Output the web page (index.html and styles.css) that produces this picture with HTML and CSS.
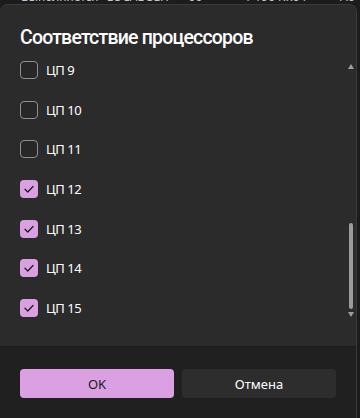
FILE: index.html
```html
<!DOCTYPE html>
<html lang="ru">
  <head>
    <meta charset="UTF-8" />
    <title>Соответствие процессоров</title>
    <link rel="stylesheet" href="styles.css">
  </head>
  <body>
    <div class="behind">
      <span class="cell c1">Выполняется</span>
      <span class="cell c2">LOCAL SEH</span>
      <span class="cell c3">00</span>
      <span class="cell c4">1 196 K</span>
      <span class="cell c5">x64</span>
      <span class="cell c6">Ao</span>
    </div>

    <section class="dialog">
      <div class="body">
        <h1 class="title">Соответствие процессоров</h1>
        <div class="scroller">
          <ul class="items">
            <li class="item"><span class="box"></span><span class="label">ЦП 9</span></li>
            <li class="item"><span class="box"></span><span class="label">ЦП 10</span></li>
            <li class="item"><span class="box"></span><span class="label">ЦП 11</span></li>
            <li class="item"><span class="box checked"><svg viewBox="0 0 18 18" width="18" height="18"><polyline points="5,9.3 7.8,12 13,6.5" /></svg></span><span class="label">ЦП 12</span></li>
            <li class="item"><span class="box checked"><svg viewBox="0 0 18 18" width="18" height="18"><polyline points="5,9.3 7.8,12 13,6.5" /></svg></span><span class="label">ЦП 13</span></li>
            <li class="item"><span class="box checked"><svg viewBox="0 0 18 18" width="18" height="18"><polyline points="5,9.3 7.8,12 13,6.5" /></svg></span><span class="label">ЦП 14</span></li>
            <li class="item"><span class="box checked"><svg viewBox="0 0 18 18" width="18" height="18"><polyline points="5,9.3 7.8,12 13,6.5" /></svg></span><span class="label">ЦП 15</span></li>
          </ul>
          <div class="scrollbar">
            <svg class="arrow" viewBox="0 0 6 5" width="6" height="5"><polygon points="3,0 6,5 0,5" /></svg>
            <div class="track">
              <div class="thumb"></div>
            </div>
            <svg class="arrow" viewBox="0 0 6 5" width="6" height="5"><polygon points="0,0 6,0 3,5" /></svg>
          </div>
        </div>
      </div>
      <footer class="footer">
        <button class="btn primary">OK</button>
        <button class="btn">Отмена</button>
      </footer>
    </section>
  </body>
</html>
```

FILE: styles.css
```css
* {
  padding: 0;
  margin: 0;
  box-sizing: border-box;
}

html,
body {
  height: 100%;
  overflow: hidden;
}

body {
  background: #1c1c1c;
  font-family: "Noto Sans", "Open Sans", sans-serif;
  color: #fff;
}

.behind {
  height: 4px;
  overflow: hidden;
  display: flex;
  font-size: 12px;
  line-height: 14px;
  color: #bfc6d0;
}

.cell {
  margin-top: -10px;
  white-space: nowrap;
}

.c1 { margin-left: 21px; width: 86px; }
.c2 { width: 82px; }
.c3 { width: 56px; }
.c4 { width: 42px; }
.c5 { width: 54px; }
.c6 { width: 20px; }

.dialog {
  width: 357px;
  height: 414px;
  display: flex;
  flex-direction: column;
  background: #2b2b2b;
  border: 1px solid #3a3a3a;
  border-left: none;
  border-bottom: none;
  border-radius: 8px 8px 0 0;
  overflow: hidden;
}

.body {
  height: 341px;
  padding-top: 19px;
  display: flex;
  flex-direction: column;
}

.title {
  padding-left: 20px;
  font-family: Roboto, "Noto Sans", sans-serif;
  font-size: 19.5px;
  line-height: 28px;
  font-weight: 500;
  letter-spacing: -0.8px;
}

.scroller {
  flex: 1;
  display: flex;
  margin-top: -2px;
}

.items {
  flex: 1;
  list-style: none;
  padding-left: 20px;
}

.item {
  height: 39.7px;
  display: flex;
  align-items: center;
  gap: 8px;
}

.box {
  width: 18px;
  height: 18px;
  border: 1px solid #8f8f8f;
  border-radius: 4px;
  background: #272727;
}

.box.checked {
  border: none;
  background: #dba0e2;
}

.box svg {
  display: block;
}

.box polyline {
  fill: none;
  stroke: #1e1e1e;
  stroke-width: 1.3;
  stroke-linecap: round;
  stroke-linejoin: round;
}

.label {
  font-size: 13px;
  letter-spacing: -0.4px;
}

.scrollbar {
  width: 6px;
  margin: 14px 2px 29px 0;
  display: flex;
  flex-direction: column;
  align-items: center;
}

.arrow polygon {
  fill: #9e9e9e;
}

.track {
  flex: 1;
  display: flex;
  flex-direction: column;
  justify-content: flex-end;
  padding: 0 1px 3px;
  width: 100%;
}

.thumb {
  height: 86px;
  border-radius: 2px;
  background: #9b9b9b;
}

.footer {
  flex: 1;
  display: flex;
  gap: 8px;
  padding: 22px 20px 0;
  background: #202020;
  border-top: 1px solid #1a1a1a;
}

.btn {
  flex: 1;
  height: 29px;
  border: none;
  border-radius: 4px;
  font-family: "Noto Sans", "Open Sans", sans-serif;
  font-size: 13px;
  color: #fff;
  background: #2d2d2d;
}

.btn.primary {
  background: #dba0e2;
  color: #1a1a1a;
}
```
